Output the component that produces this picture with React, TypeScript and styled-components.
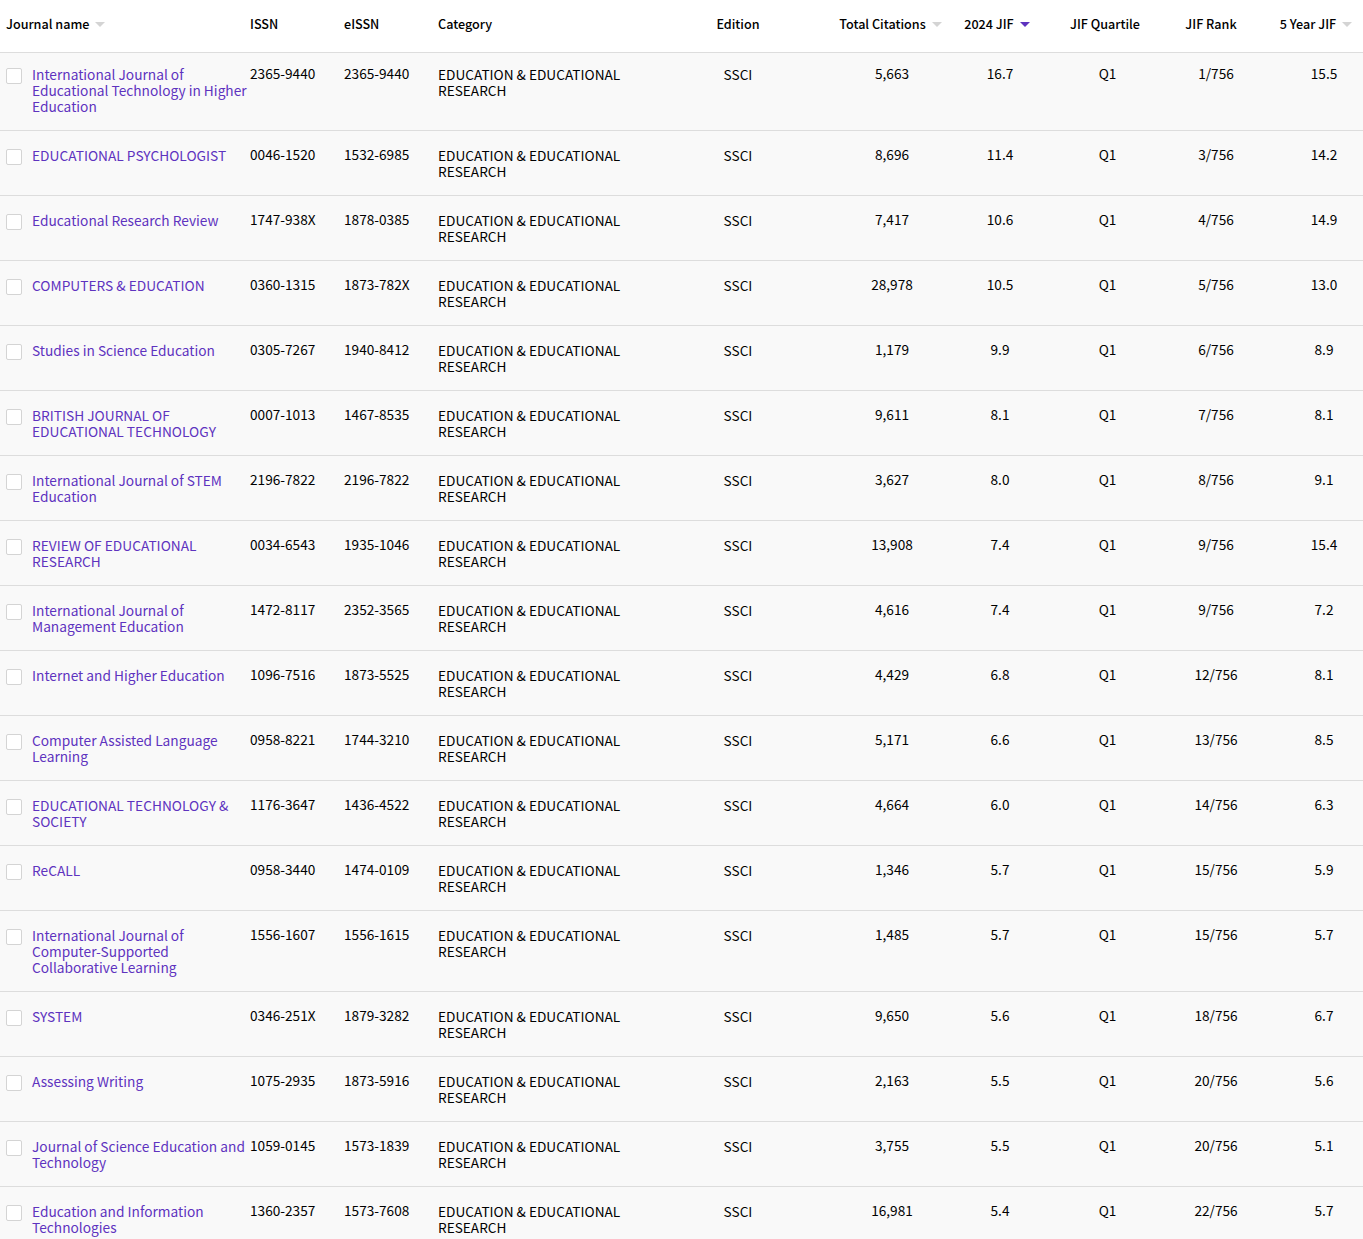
import React from "react";
import styled, { createGlobalStyle } from "styled-components";

const Global = createGlobalStyle`
  html, body { margin: 0; padding: 0; background: #fff; overflow: hidden; height: 1239px; }
  body { font-family: "Noto Sans CJK SC", "Noto Sans", sans-serif; color: #000; }
  * { box-sizing: border-box; }
`;

const COLUMNS = "250px 94px 94px 200px 200px 108px 108px 106px 112px 91px";

const Table = styled.div`
  width: 1363px;
`;

const HeaderRow = styled.div`
  display: grid;
  grid-template-columns: ${COLUMNS};
  height: 53px;
  align-items: center;
  padding-bottom: 4px;
  background: #fff;
  border-bottom: 1px solid #ddd;
`;

const HeaderCell = styled.div<{ $center?: boolean; $shift?: number; $indent?: number }>`
  display: flex;
  align-items: center;
  justify-content: ${(p) => (p.$center ? "center" : "flex-start")};
  padding-left: ${(p) => p.$indent ?? 0}px;
  padding-right: ${(p) => p.$shift ?? 0}px;
  font-size: 12.6px;
  font-weight: 500;
  line-height: 16px;
  white-space: nowrap;
  color: #000;
`;

const SortArrow = styled.span<{ $active?: boolean }>`
  width: 0;
  height: 0;
  margin-left: 6px;
  margin-top: 1px;
  border-left: 5px solid transparent;
  border-right: 5px solid transparent;
  border-top: 5px solid ${(p) => (p.$active ? "#5e33bf" : "#d4d4d4")};
`;

const Row = styled.div<{ $first?: boolean }>`
  display: grid;
  grid-template-columns: ${COLUMNS};
  padding: ${(p) => (p.$first ? "13px" : "16px")} 0 16px;
  background: #f9f9f9;
  border-bottom: 1px solid #ddd;
`;

const NameCell = styled.div`
  display: flex;
  align-items: flex-start;
  padding-left: 6px;
`;

const Checkbox = styled.span`
  flex: none;
  width: 16px;
  height: 16px;
  margin-top: 2px;
  margin-right: 10px;
  background: #fff;
  border: 1px solid #d4d4d4;
  border-radius: 2px;
`;

const JournalLink = styled.a`
  font-size: 13.72px;
  line-height: 16px;
  color: #5e33bf;
  text-decoration: none;
  min-width: 0;
`;

const Code = styled.div`
  font-size: 13.65px;
  line-height: 16px;
  margin-top: -1px;
`;

const Category = styled.div`
  font-size: 13.65px;
  line-height: 16px;
`;

const Edition = styled.div`
  font-size: 13.65px;
  line-height: 16px;
  text-align: center;
`;

const Metric = styled.div<{ $indent?: number }>`
  font-size: 13.65px;
  line-height: 16px;
  margin-top: -1px;
  text-align: center;
  padding-left: ${(p) => p.$indent ?? 0}px;
`;

type Journal = [string, string, string, string, string, string, string];

const journals: Journal[] = [
  ["International Journal of Educational Technology in Higher Education", "2365-9440", "2365-9440", "5,663", "16.7", "1/756", "15.5"],
  ["EDUCATIONAL PSYCHOLOGIST", "0046-1520", "1532-6985", "8,696", "11.4", "3/756", "14.2"],
  ["Educational Research Review", "1747-938X", "1878-0385", "7,417", "10.6", "4/756", "14.9"],
  ["COMPUTERS & EDUCATION", "0360-1315", "1873-782X", "28,978", "10.5", "5/756", "13.0"],
  ["Studies in Science Education", "0305-7267", "1940-8412", "1,179", "9.9", "6/756", "8.9"],
  ["BRITISH JOURNAL OF EDUCATIONAL TECHNOLOGY", "0007-1013", "1467-8535", "9,611", "8.1", "7/756", "8.1"],
  ["International Journal of STEM Education", "2196-7822", "2196-7822", "3,627", "8.0", "8/756", "9.1"],
  ["REVIEW OF EDUCATIONAL RESEARCH", "0034-6543", "1935-1046", "13,908", "7.4", "9/756", "15.4"],
  ["International Journal of Management Education", "1472-8117", "2352-3565", "4,616", "7.4", "9/756", "7.2"],
  ["Internet and Higher Education", "1096-7516", "1873-5525", "4,429", "6.8", "12/756", "8.1"],
  ["Computer Assisted Language Learning", "0958-8221", "1744-3210", "5,171", "6.6", "13/756", "8.5"],
  ["EDUCATIONAL TECHNOLOGY & SOCIETY", "1176-3647", "1436-4522", "4,664", "6.0", "14/756", "6.3"],
  ["ReCALL", "0958-3440", "1474-0109", "1,346", "5.7", "15/756", "5.9"],
  ["International Journal of Computer-Supported Collaborative Learning", "1556-1607", "1556-1615", "1,485", "5.7", "15/756", "5.7"],
  ["SYSTEM", "0346-251X", "1879-3282", "9,650", "5.6", "18/756", "6.7"],
  ["Assessing Writing", "1075-2935", "1873-5916", "2,163", "5.5", "20/756", "5.6"],
  ["Journal of Science Education and Technology", "1059-0145", "1573-1839", "3,755", "5.5", "20/756", "5.1"],
  ["Education and Information Technologies", "1360-2357", "1573-7608", "16,981", "5.4", "22/756", "5.7"],
];

export default function App() {
  return (
    <>
      <Global />
      <Table>
        <HeaderRow>
          <HeaderCell $indent={6}>Journal name<SortArrow /></HeaderCell>
          <HeaderCell>ISSN</HeaderCell>
          <HeaderCell>eISSN</HeaderCell>
          <HeaderCell>Category</HeaderCell>
          <HeaderCell $center>Edition</HeaderCell>
          <HeaderCell $center $shift={3}>Total Citations<SortArrow /></HeaderCell>
          <HeaderCell $center $shift={6}>2024 JIF<SortArrow $active /></HeaderCell>
          <HeaderCell $center $shift={4}>JIF Quartile</HeaderCell>
          <HeaderCell $center $shift={10}>JIF Rank</HeaderCell>
          <HeaderCell $center $shift={3}>5 Year JIF<SortArrow /></HeaderCell>
        </HeaderRow>
        {journals.map(([name, issn, eissn, citations, jif, rank, five], i) => (
          <Row key={name} $first={i === 0}>
            <NameCell>
              <Checkbox />
              <JournalLink href="#">{name}</JournalLink>
            </NameCell>
            <Code>{issn}</Code>
            <Code>{eissn}</Code>
            <Category>EDUCATION &amp; EDUCATIONAL RESEARCH</Category>
            <Edition>SSCI</Edition>
            <Metric>{citations}</Metric>
            <Metric>{jif}</Metric>
            <Metric $indent={1}>Q1</Metric>
            <Metric>{rank}</Metric>
            <Metric $indent={13}>{five}</Metric>
          </Row>
        ))}
      </Table>
    </>
  );
}
